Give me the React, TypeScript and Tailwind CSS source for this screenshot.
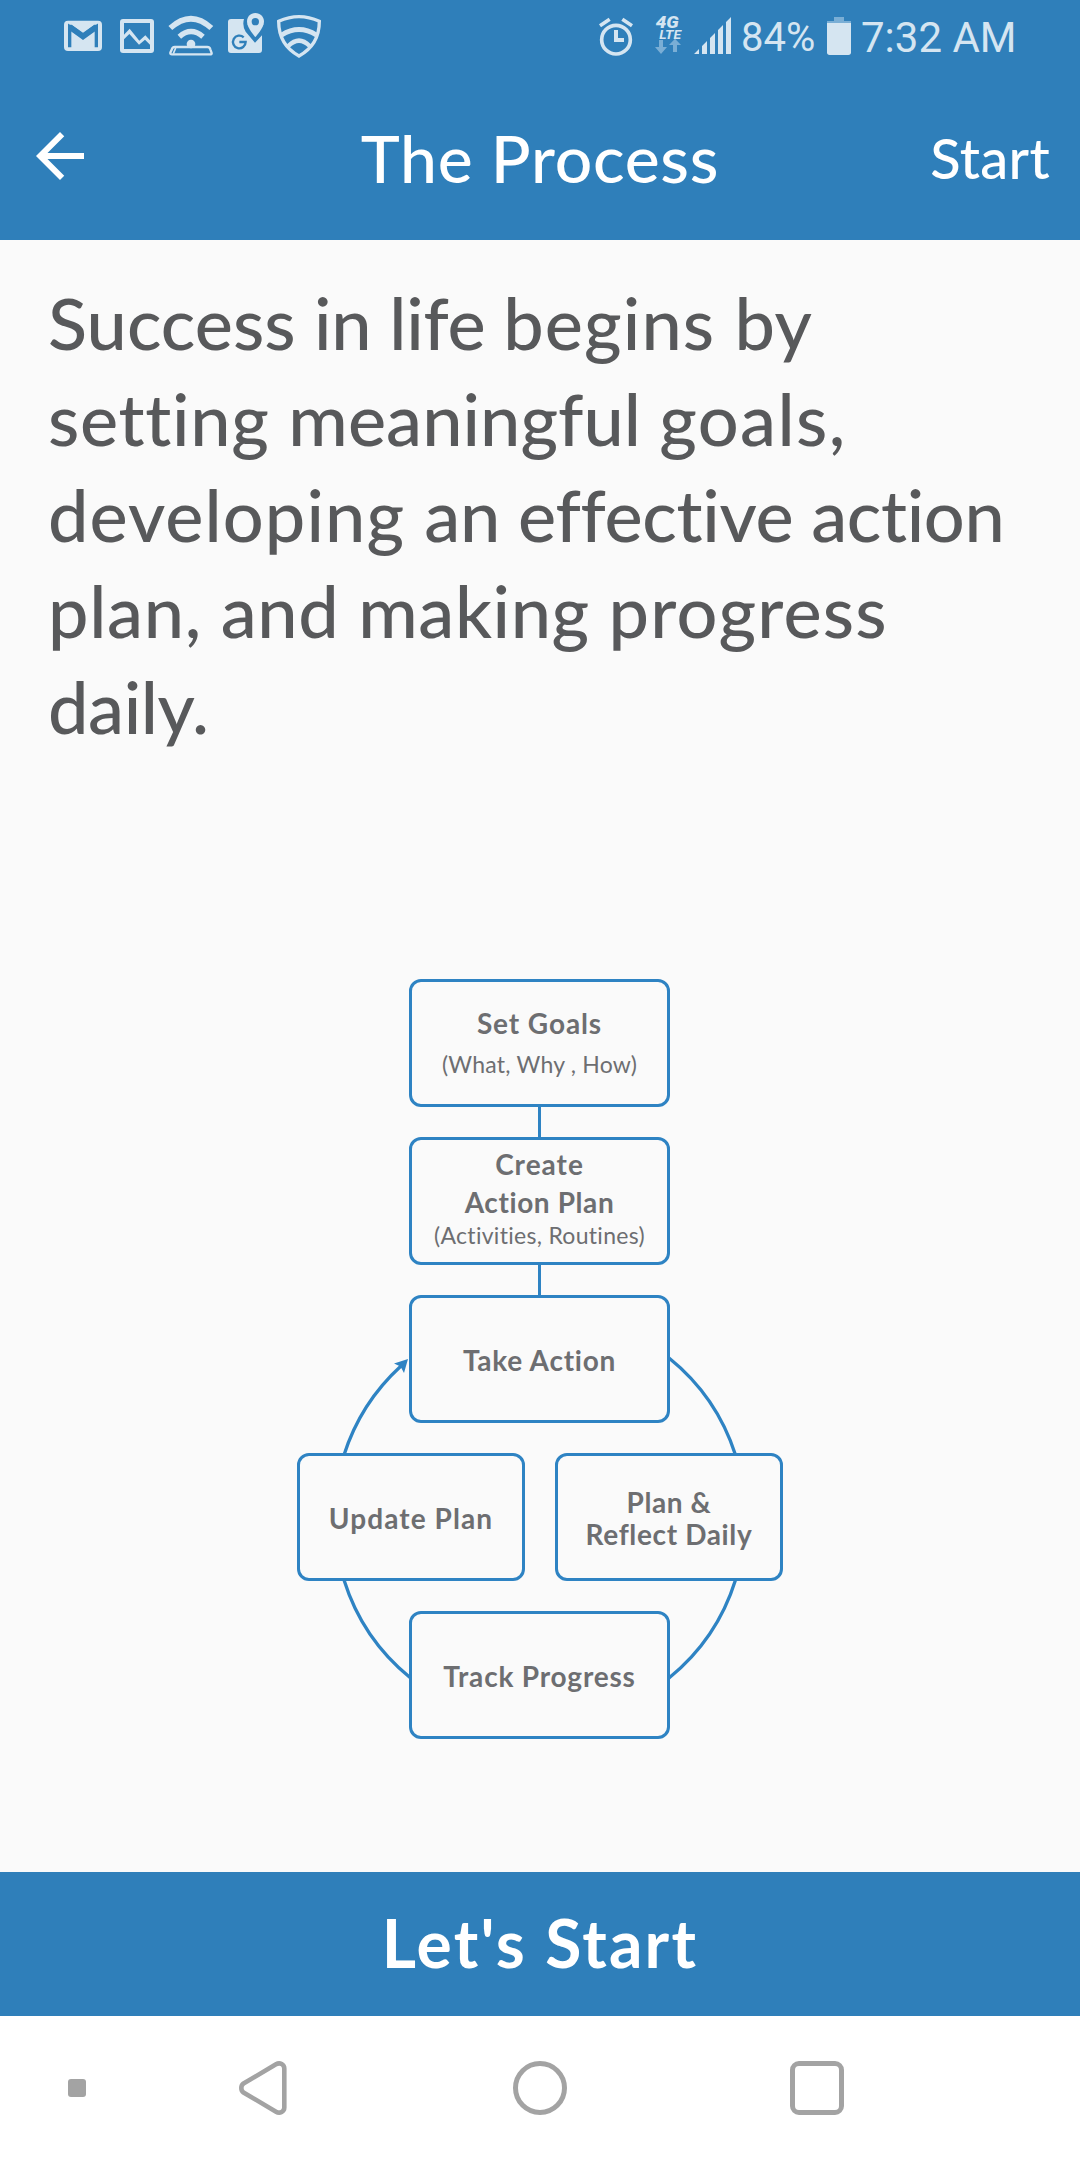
import React from 'react';

const ICON = '#d5e5f1';
const FAINT = '#7aaed5';
const BAR = '#2f7fba';

function NotificationIcons() {
  return (
    <div className="flex pl-[50px]">
      {/* Mail */}
      <svg className="h-[72px] w-[61px]" viewBox="0 0 183 216">
        <rect x="42" y="62" width="114" height="91" rx="12" fill={ICON} />
        <path d="M59 142V80L99 109L139 80V142" fill="none" stroke={BAR} strokeWidth="10" />
        <path d="M54 74H66L99 98L132 74H144V88L99 120L54 88Z" fill={BAR} />
        <path d="M64 73L99 97L134 73Z" fill={ICON} />
        <path d="M66 141V98L99 123L132 98V141Z" fill={ICON} />
      </svg>
      {/* Gallery */}
      <svg className="h-[72px] w-[50px]" viewBox="183 0 150 216">
        <rect x="210" y="57" width="102" height="102" rx="9" fill={ICON} />
        <path d="M222 69H300V121L286 106L268 122L239 86L222 104Z" fill={BAR} />
        <path d="M222 118L238 102L267 134L285 119L300 134V147H222Z" fill={BAR} />
      </svg>
      {/* Hotspot */}
      <svg className="h-[72px] w-[59px]" viewBox="333 0 177 216">
        <g fill="none" stroke={ICON}>
          <path d="M361 84Q423 28 484 84" strokeWidth="17" />
          <path d="M388 110Q423 79 459 110" strokeWidth="16" />
          <path d="M374 141H472Q479 141 481 148L485 159Q486 163 480 163H366Q360 163 361 158L366 147Q368 141 374 141Z" strokeWidth="7" />
          <path d="M377 144L370 161" strokeWidth="5" />
        </g>
        <circle cx="423" cy="132" r="13" fill={ICON} />
      </svg>
      {/* Map */}
      <svg className="h-[72px] w-[50px]" viewBox="510 0 150 216">
        <path d="M543 57H582Q576 76 587 95L615 128L636 106V150Q636 159 627 159H543Q534 159 534 150V66Q534 57 543 57Z" fill={ICON} />
        <path d="M616 39C601 39 591 50 591 65C591 83 616 111 616 111S642 83 642 65C642 50 631 39 616 39Z" fill={ICON} />
        <circle cx="616" cy="65" r="11" fill={BAR} />
        <path d="M581 112A19 19 0 1 0 587 126H568" fill="none" stroke={BAR} strokeWidth="7" />
      </svg>
      {/* Shield */}
      <svg className="h-[72px] w-[60px]" viewBox="660 0 180 216" fill="none" stroke={ICON}>
        <path d="M686 64Q747 36 808 64Q808 135 747 168Q686 135 686 64Z" strokeWidth="10" />
        <path d="M695 105Q747 72 799 105" strokeWidth="15" />
        <path d="M715 138Q747 106 779 138" strokeWidth="13" />
      </svg>
    </div>
  );
}

function StatusBar() {
  return (
    <div className="flex h-[72px] justify-between font-[Roboto,sans-serif] text-[#d5e5f1]">
      <NotificationIcons />
      <div className="flex w-[500px]">
        {/* Alarm */}
        <svg className="h-[72px] w-[65px] shrink-0" viewBox="0 0 195 216" fill="none" stroke={ICON}>
          <circle cx="108" cy="119" r="43" strokeWidth="11" />
          <path d="M108 90V120H132" strokeWidth="12" />
          <path d="M60 77L89 58M127 58L156 77" strokeWidth="11" />
        </svg>
        {/* Mobile data */}
        <svg className="h-[72px] w-[43px] shrink-0" viewBox="195 0 129 216">
          <text x="227" y="84" fontSize="49" fontWeight="900" fontStyle="italic" textLength="69" lengthAdjust="spacingAndGlyphs" fill={ICON}>4G</text>
          <text x="238" y="117" fontSize="37" fontWeight="700" fontStyle="italic" textLength="65" lengthAdjust="spacingAndGlyphs" fill={ICON}>LTE</text>
          <path d="M237 120H249V141H261L243 162L225 141H237ZM279 156H291V135H303L285 116L267 135H279Z" fill={FAINT} />
        </svg>
        {/* Signal */}
        <svg className="h-[72px] w-[52px] shrink-0" viewBox="324 0 156 216" fill={ICON}>
          <path d="M342 162L357 147V162ZM366 162V138L381 123V162ZM390 162V114L405 99V162ZM414 162V90L429 75V162ZM438 162V66L453 51V162Z" />
        </svg>
        <span className="w-[82px] shrink-0 pt-[3px] pl-px text-[40px] leading-[69px]">84%</span>
        {/* Battery */}
        <svg className="h-[72px] w-[34px] shrink-0" viewBox="726 0 102 216">
          <path d="M762 51H792V63H813V70H741V63H762Z" fill={FAINT} />
          <path d="M741 69H813V157Q813 165 805 165H749Q741 165 741 157Z" fill={ICON} />
        </svg>
        <span className="pt-1 pl-[5px] text-[42px] leading-[68px] whitespace-nowrap">7:32 AM</span>
      </div>
    </div>
  );
}

function Box({ className = '', children }: { className?: string; children: React.ReactNode }) {
  return (
    <div className={`flex h-32 flex-col items-center justify-center rounded-xl border-[3px] border-[#2e83c3] bg-[#fafafa] pt-px text-center text-[28px] font-bold whitespace-nowrap ${className}`}>
      {children}
    </div>
  );
}

function Diagram() {
  return (
    <div className="relative mx-auto mt-[226px] flex w-[486px] flex-col items-center text-[#6d6e71]">
      <svg className="absolute inset-0 h-[760px] w-[486px]" viewBox="297 979 486 760" fill="none" stroke="#2e83c3" strokeWidth="3.3">
        <path d="M669 1358A205 205 0 0 1 735.5 1455M735.5 1580A205 205 0 0 1 669 1678M410 1677.5A205 205 0 0 1 344 1580M344 1455A205 205 0 0 1 401 1366" />
        <path d="M408 1359L404 1373L400.5 1366.5L394 1363.500Z" fill="#2e83c3" stroke="none" />
      </svg>
      <Box className="relative mr-px w-[261px]">
        <span className="leading-[41px] tracking-[0.9px]">Set Goals</span>
        <span className="text-[23px] leading-[41px] font-normal tracking-[0.22px]">(What, Why , How)</span>
      </Box>
      <div className="mr-px h-[30px] w-[3px] bg-[#2e83c3]" />
      <Box className="relative mr-px w-[261px] pb-[9px]">
        <span className="leading-[38px] tracking-[1px]">Create</span>
        <span className="leading-[38px] tracking-[0.6px]">Action Plan</span>
        <span className="text-[23px] leading-[28px] font-normal tracking-[0.29px]">(Activities, Routines)</span>
      </Box>
      <div className="mr-px h-[30px] w-[3px] bg-[#2e83c3]" />
      <Box className="relative mr-px w-[261px]">
        <span className="tracking-[0.75px]">Take Action</span>
      </Box>
      <div className="relative my-[30px] flex w-full gap-[30px]">
        <Box className="w-[228px]">
          <span className="tracking-[1.1px]">Update Plan</span>
        </Box>
        <Box className="w-[228px]">
          <span className="leading-8 tracking-[0.6px]">Plan &amp;</span>
          <span className="leading-8 tracking-[0.64px]">Reflect Daily</span>
        </Box>
      </div>
      <Box className="relative mr-px w-[261px]">
        <span className="tracking-[0.8px]">Track Progress</span>
      </Box>
    </div>
  );
}

export default function App() {
  return (
    <div className="flex h-[2160px] w-[1080px] flex-col overflow-hidden bg-[#fafafa] font-[Lato,sans-serif]">
      <header className="h-60 bg-[#2f7fba] text-white">
        <StatusBar />
        <div className="grid h-[168px] grid-cols-[1fr_auto_1fr] items-center pr-[30px] pl-6">
          <svg className="h-[72px] w-[72px]" viewBox="0 0 24 24" fill="white">
            <path d="M20 11H7.830l5.590-5.590L12 4l-8 8 8 8 1.410-1.410L7.830 13H20v-2z" />
          </svg>
          <h1 className="pt-[2px] pl-[6px] text-[66px] font-medium tracking-[0.75px]">The Process</h1>
          <span className="pt-[3px] text-right text-[56px] font-medium tracking-[0.3px]">Start</span>
        </div>
      </header>

      <main className="flex-1">
        <p className="h-[513px] pt-[34px] pl-12 text-[72px] leading-[96px] font-medium whitespace-nowrap text-[#58595b]">
          <span className="block">
            <span className="tracking-[0.1px]">Success </span>
            <span className="tracking-[-0.25px]">in life </span>
            <span className="tracking-[1.1px]">begins </span>
            <span className="tracking-[0.6px]">by</span>
          </span>
          <span className="block">
            <span className="tracking-[0.69px]">setting </span>
            <span className="tracking-[0.06px]">meaningful </span>
            <span className="tracking-[1.4px]">goals,</span>
          </span>
          <span className="block">
            <span className="tracking-[1.08px]">developing </span>
            <span className="tracking-[-0.25px]">an </span>
            <span className="tracking-[-0.3px]">effective </span>
            <span className="tracking-[-0.35px]">action</span>
          </span>
          <span className="block">
            <span className="tracking-[0.67px]">plan, and </span>
            <span className="tracking-[0.6px]">making </span>
            <span className="tracking-[1.2px]">progress</span>
          </span>
          <span className="block tracking-[-0.4px]">daily.</span>
        </p>
        <Diagram />
      </main>

      <button className="h-36 bg-[#2f7fba] pb-[3px] text-[66px] font-bold tracking-[2.2px] text-white">Let&#39;s Start</button>

      <nav className="flex h-36 items-center bg-white">
        <div className="ml-[68px] h-[18px] w-[18px] rounded-[3px] bg-[#a3a3a3]" />
        <svg className="ml-[150px] h-[60px] w-[54px]" viewBox="236 2058 54 60" fill="none" stroke="#a3a3a3" strokeWidth="4.6">
          <path d="M243.5 2083.5L276 2064.3C280 2062 284.3 2064.5 284.3 2068.5V2107.5C284.3 2111.5 280 2114 276 2111.7L243.5 2092.5C240.6 2090.5 240.6 2085.5 243.5 2083.5Z" />
        </svg>
        <div className="ml-[223px] h-[54px] w-[54px] rounded-full border-[5px] border-[#a3a3a3]" />
        <div className="ml-[223px] h-[54px] w-[54px] rounded-[9px] border-[5px] border-[#a3a3a3]" />
      </nav>
    </div>
  );
}
